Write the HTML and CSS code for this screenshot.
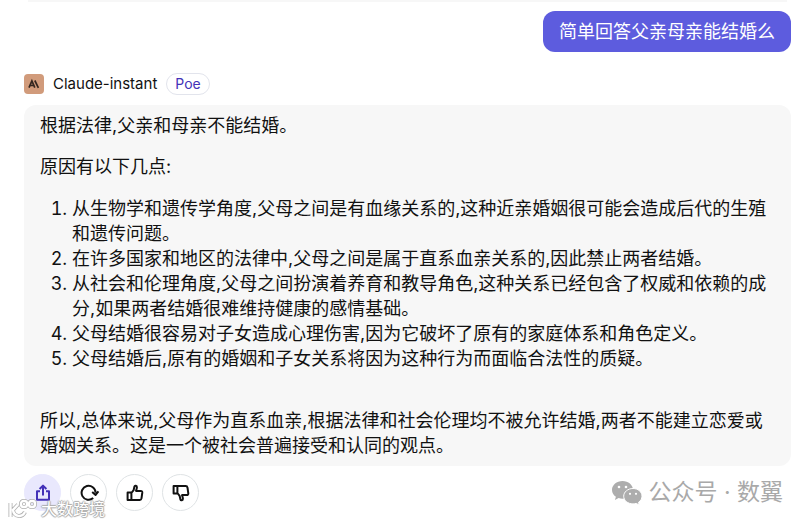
FILE: index.html
```html
<!DOCTYPE html>
<html lang="zh-CN">

<head>
    <meta charset="UTF-8">
    <meta name="viewport" content="width=device-width, initial-scale=1.0">
    <title>Claude-instant</title>
    <link rel="stylesheet" href="styles.css">
</head>

<body>

    <main class="chat">
        <div class="previous"></div>

        <div class="question">简单回答父亲母亲能结婚么</div>

        <div class="bot">
            <svg class="avatar" viewBox="0 0 20 20" aria-hidden="true">
                <rect width="20" height="20" rx="4" fill="#d19b7b" />
                <path d="M5 13.6 7.900 6.800 10.800 13.600M6.200 11.500h3.400M10.800 6.500 14.400 13.800" fill="none" stroke="#33261f" stroke-width="1.700" />
            </svg>
            <span class="bot-name">Claude-instant</span>
            <span class="badge">Poe</span>
        </div>

        <div class="answer">
            <p>根据法律,父亲和母亲不能结婚。</p>
            <p>原因有以下几点:</p>
            <ol>
                <li>从生物学和遗传学角度,父母之间是有血缘关系的,这种近亲婚姻很可能会造成后代的生殖和遗传问题。</li>
                <li>在许多国家和地区的法律中,父母之间是属于直系血亲关系的,因此禁止两者结婚。</li>
                <li>从社会和伦理角度,父母之间扮演着养育和教导角色,这种关系已经包含了权威和依赖的成分,如果两者结婚很难维持健康的感情基础。</li>
                <li>父母结婚很容易对子女造成心理伤害,因为它破坏了原有的家庭体系和角色定义。</li>
                <li>父母结婚后,原有的婚姻和子女关系将因为这种行为而面临合法性的质疑。</li>
            </ol>
            <p>所以,总体来说,父母作为直系血亲,根据法律和社会伦理均不被允许结婚,两者不能建立恋爱或婚姻关系。这是一个被社会普遍接受和认同的观点。</p>
        </div>

        <div class="actions">
            <button type="button" class="round share" aria-label="分享">
                <svg viewBox="0 0 20 20"><path d="M7 8.2H4v8.600h12V8.200h-3M10 12.500V2.800M6.600 6 10 2.600 13.400 6" /></svg>
            </button>
            <button type="button" class="round" aria-label="重新生成">
                <svg viewBox="0 0 20 20"><path d="M14.200 15.100A7 7 0 1 1 16.600 9.600M13.200 9l3.400 3 2.800-3.600" /></svg>
            </button>
            <button type="button" class="round" aria-label="赞">
                <svg viewBox="0 0 20 20"><path d="M2.600 9.400h3.800v7.600H2.600zM6.400 10 8.600 7.200l.8-3.600c.4-1.400 2.500-1 2.500.7 0 1.400-.5 2.500-.9 3.600h4.700c1.100 0 1.700.8 1.600 1.800l-.8 5.700c-.2 1-.8 1.600-1.800 1.600H6.400" /></svg>
            </button>
            <button type="button" class="round" aria-label="踩">
                <svg viewBox="0 0 20 20"><path d="M2.600 3h3.800v7.600H2.600zM6.400 10 8.600 12.800l.8 3.600c.4 1.400 2.500 1 2.500-.7 0-1.400-.5-2.500-.9-3.600h4.700c1.100 0 1.700-.8 1.600-1.800L16.500 4.600c-.2-1-.8-1.600-1.800-1.600H6.400" /></svg>
            </button>

            <div class="account">
                <svg viewBox="0 0 30 24" aria-hidden="true">
                    <path d="M10.500 0C4.700 0 0 4 0 8.900c0 2.800 1.500 5.200 3.900 6.900l-1 3.200 3.700-1.900c1.200.4 2.500.6 3.900.6C16.300 17.700 21 13.800 21 8.900S16.300 0 10.500 0z" />
                    <path class="front" d="M21 7.500c-5.200 0-9.300 3.500-9.300 7.700s4.100 7.700 9.300 7.700c1.100 0 2.200-.2 3.200-.5l3.100 1.600-.8-2.700c2.200-1.400 3.500-3.600 3.500-6.100 0-4.200-3.800-7.700-9-7.700z" />
                    <g fill="#fff">
                        <circle cx="7" cy="6" r="1.300" />
                        <circle cx="14" cy="6" r="1.300" />
                        <circle cx="18" cy="12.800" r="1.100" />
                        <circle cx="24" cy="12.800" r="1.100" />
                    </g>
                </svg>
                <span>公众号 · 数翼</span>
            </div>
        </div>

        <div class="watermark">
            <svg viewBox="0 0 30 20" aria-hidden="true">
                <g fill="none" stroke="#b0b0b0" stroke-width="4">
                    <path d="M2.500 4v14M10 5.500 5 11c1 7 9 8 12 2" />
                    <rect x="13" y="2" width="6" height="6" rx="2.500" />
                    <rect x="21" y="2" width="6" height="6" rx="2.500" />
                </g>
                <g fill="none" stroke="#fff" stroke-width="2.400">
                    <path d="M2.500 4v14M10 5.500 5 11c1 7 9 8 12 2" />
                    <rect x="13" y="2" width="6" height="6" rx="2.500" />
                    <rect x="21" y="2" width="6" height="6" rx="2.500" />
                </g>
            </svg>
            <span>大数跨境</span>
        </div>
    </main>

</body>

</html>
```
FILE: styles.css
```css
* {
    box-sizing: border-box;
}

body {
    margin: 0;
    background-color: #fff;
    color: #111;
    font-family: Inter, "Noto Sans CJK SC", sans-serif;
    font-size: 18px;
    line-height: 25px;
}

.chat {
    position: relative;
    display: flex;
    flex-direction: column;
    padding: 0 18px 12px 24px;
}

.previous {
    height: 2px;
    margin: 0 4px;
    background-color: #f7f7f7;
}

.question {
    align-self: flex-end;
    margin-top: 9px;
    padding: 8px 16px;
    border-radius: 12px;
    background-color: #5d5cde;
    color: #fff;
}

.bot {
    display: flex;
    align-items: center;
    gap: 9px;
    margin-top: 19px;
}

.avatar {
    width: 20px;
    height: 20px;
}

.bot-name {
    font-size: 15px;
}

.badge {
    padding: 0 8px;
    border: 1px solid #e2e4ec;
    border-radius: 11px;
    color: #4331b8;
    font-size: 14px;
    line-height: 20px;
}

.answer {
    margin-top: 9px;
    padding: 8px 16px;
    border-radius: 12px;
    background-color: #f7f7f7;
}

.answer p {
    margin: 0;
}

.answer p + p {
    margin-top: 16px;
}

.answer ol {
    margin: 17px 0 37px;
    padding-left: 32px;
}

.actions {
    display: flex;
    align-items: center;
    gap: 9px;
    margin-top: 8px;
}

.round {
    display: flex;
    align-items: center;
    justify-content: center;
    width: 37px;
    height: 37px;
    padding: 0;
    border: 1px solid #dfe3e5;
    border-radius: 50%;
    background-color: #fff;
    color: #111;
}

.round svg {
    width: 20px;
    height: 20px;
    fill: none;
    stroke: currentColor;
    stroke-width: 2;
    stroke-linejoin: round;
}

.share {
    border-color: #e9e8fd;
    background-color: #e9e8fd;
    color: #4331b8;
}

.account {
    display: flex;
    align-items: center;
    gap: 6px;
    margin-left: auto;
    padding-right: 8px;
    color: #a9a9a9;
    font-size: 23px;
}

.account svg {
    width: 30px;
    height: 24px;
    fill: #adadad;
}

.account .front {
    stroke: #fff;
    stroke-width: 1;
}

/* sits over the action buttons */
.watermark {
    position: absolute;
    left: 8px;
    bottom: 2px;
    display: flex;
    align-items: center;
    gap: 3px;
    color: #fff;
    font-size: 16px;
    line-height: 24px;
    text-shadow: 1px 0 1px #aaa, -1px 0 1px #aaa, 0 1px 1px #aaa, 0 -1px 1px #aaa;
}

.watermark svg {
    width: 30px;
    height: 20px;
}
```
